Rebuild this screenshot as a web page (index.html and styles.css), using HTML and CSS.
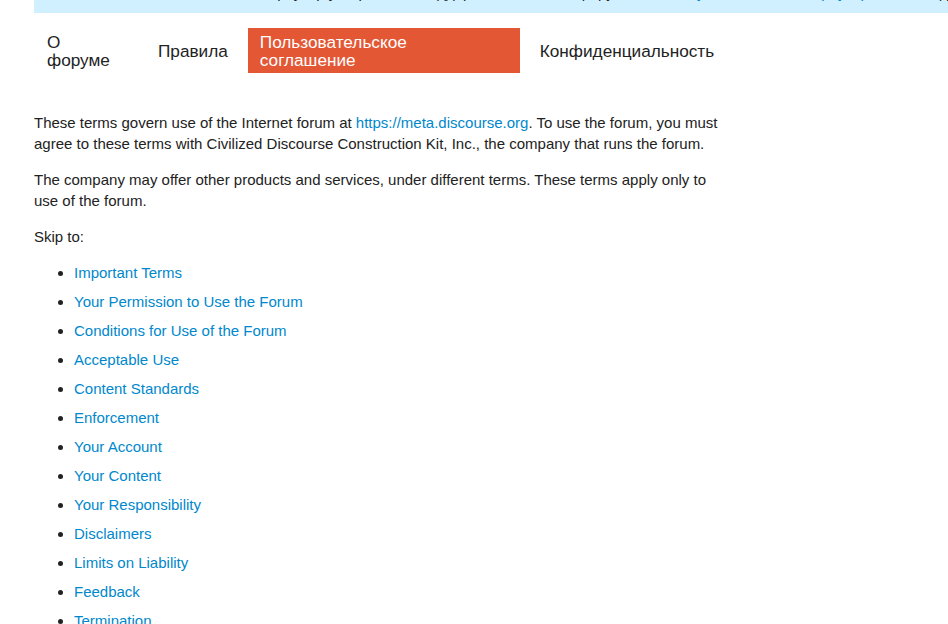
FILE: index.html
```html
<!DOCTYPE html>
<html lang="ru">
<head>
    <meta charset="UTF-8">
    <meta name="viewport" content="width=device-width, initial-scale=1.0">
    <title>Пользовательское соглашение</title>
    <link rel="stylesheet" href="styles.css">
</head>
<body>
    <div class="page">
        <div class="notice">
            Ваш браузер устарел и не поддерживается этим форумом. <a href="#">Пожалуйста, обновите браузер</a>, чтобы видеть содержимое полностью и пользоваться всеми возможностями <a href="#">форума</a>.
        </div>

        <ul class="nav-pills">
            <li><a href="#">О<br>форуме</a></li>
            <li><a href="#">Правила</a></li>
            <li class="active"><a href="#">Пользовательское<br>соглашение</a></li>
            <li><a href="#">Конфиденциальность</a></li>
        </ul>

        <div class="body-page">
            <p>These terms govern use of the Internet forum at <a href="#">https://meta.discourse.org</a>. To use the forum, you must agree to these terms with Civilized Discourse Construction Kit, Inc., the company that runs the forum.</p>

            <p>The company may offer other products and services, under different terms. These terms apply only to use of the forum.</p>

            <p>Skip to:</p>

            <ul class="toc">
                <li><a href="#">Important Terms</a></li>
                <li><a href="#">Your Permission to Use the Forum</a></li>
                <li><a href="#">Conditions for Use of the Forum</a></li>
                <li><a href="#">Acceptable Use</a></li>
                <li><a href="#">Content Standards</a></li>
                <li><a href="#">Enforcement</a></li>
                <li><a href="#">Your Account</a></li>
                <li><a href="#">Your Content</a></li>
                <li><a href="#">Your Responsibility</a></li>
                <li><a href="#">Disclaimers</a></li>
                <li><a href="#">Limits on Liability</a></li>
                <li><a href="#">Feedback</a></li>
                <li><a href="#">Termination</a></li>
                <li><a href="#">Disputes</a></li>
                <li><a href="#">General Terms</a></li>
            </ul>
        </div>
    </div>
</body>
</html>
```

FILE: styles.css
```css
body {
    font-family: "Liberation Sans", Arial, sans-serif;
    font-size: 15px;
    line-height: 1.4;
    color: #222;
    background-color: #fff;
    margin: 0;
    overflow: hidden;
}
a {
    color: #0088cc;
    text-decoration: none;
}
.page {
    padding-left: 34px;
}
/* notice bar, mostly scrolled out of view */
.notice {
    background-color: #d1f0ff;
    margin-top: -28px;
    padding: 10px 14px 0 200px;
    height: 31px;
    white-space: nowrap;
    overflow: hidden;
}
.nav-pills {
    display: flex;
    align-items: center;
    list-style: none;
    margin: 15px 0 0 0;
    padding: 0;
    font-size: 17.2px;
    line-height: 18px;
}
.nav-pills li {
    margin-right: 8px;
}
.nav-pills a {
    display: block;
    color: #222;
    padding: 4px 12px;
}
.nav-pills li:first-child a {
    width: 79px;
    padding-left: 13px;
}
.nav-pills .active a {
    background-color: #e45735;
    color: #fff;
    width: 248px;
    padding-top: 5px;
    padding-bottom: 4px;
}
.body-page {
    max-width: 690px;
    margin-top: 39px;
}
.body-page p {
    margin: 0 0 15px;
}
.toc {
    margin: 15px 0 0;
    padding-left: 40px;
}
.toc li {
    margin-bottom: 8px;
}
```
